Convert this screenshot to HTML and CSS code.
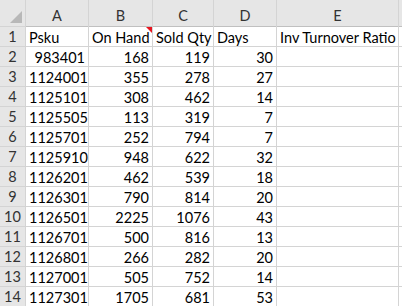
FILE: index.html
```html
<!DOCTYPE html>
<html lang="en">
<head>
    <meta charset="UTF-8">
    <title>Inventory Sheet</title>
    <link rel="stylesheet" href="styles.css">
</head>
<body>

<div class="sheet">
    <div class="corner">
        <svg width="14" height="14" viewBox="0 0 14 14"><polygon points="13,1 13,13 1,13" fill="#b8b8b8"/></svg>
    </div>
    <div class="col-head">A</div>
    <div class="col-head">B</div>
    <div class="col-head">C</div>
    <div class="col-head">D</div>
    <div class="col-head">E</div>
    <div class="col-head"></div>

    <div class="row-head">1</div>
    <div class="cell">Psku</div>
    <div class="cell note">On Hand</div>
    <div class="cell">Sold Qty</div>
    <div class="cell">Days</div>
    <div class="cell">Inv Turnover Ratio</div>
    <div class="cell"></div>
</div>

<script>
    const rows = [
        [983401, 168, 119, 30],
        [1124001, 355, 278, 27],
        [1125101, 308, 462, 14],
        [1125505, 113, 319, 7],
        [1125701, 252, 794, 7],
        [1125910, 948, 622, 32],
        [1126201, 462, 539, 18],
        [1126301, 790, 814, 20],
        [1126501, 2225, 1076, 43],
        [1126701, 500, 816, 13],
        [1126801, 266, 282, 20],
        [1127001, 505, 752, 14],
        [1127301, 1705, 681, 53]
    ];

    const sheet = document.querySelector(".sheet");
    rows.forEach((r, i) => {
        let html = '<div class="row-head">' + (i + 2) + '</div>';
        r.forEach(v => {
            html += '<div class="cell num">' + v + '</div>';
        });
        html += '<div class="cell"></div><div class="cell"></div>';
        sheet.insertAdjacentHTML("beforeend", html);
    });
</script>

</body>
</html>
```

FILE: styles.css
```css
body {
    margin: 0;
    background: #fff;
    font-family: Lato, "Liberation Sans", sans-serif;
    font-size: 14.5px;
    color: #000;
    overflow: hidden;
}
.sheet {
    display: grid;
    grid-template-columns: 25px 62px 63px 60px 62px 121px 20px;
    grid-template-rows: 26px;
    grid-auto-rows: 19px;
    gap: 1px;
    background-color: #d4d4d4;
    width: 420px;
}
.corner {
    background-color: #e6e6e6;
    display: flex;
    align-items: flex-end;
    justify-content: flex-end;
    padding: 0 2px 2px 0;
}
.corner svg {
    display: block;
}
.col-head {
    background-color: #e6e6e6;
    color: #333;
    text-align: center;
    line-height: 32px;
    border-bottom: 1px solid #c0c0c0;
    margin-bottom: -1px;
}
.row-head {
    background-color: #e6e6e6;
    color: #333;
    text-align: center;
    line-height: 20px;
}
.cell {
    background-color: #fff;
    padding: 0 3px;
    line-height: 21px;
    white-space: nowrap;
    overflow: visible;
    position: relative;
}
.num {
    text-align: right;
}
.note::after {
    content: "";
    position: absolute;
    top: 0;
    right: 0;
    border-top: 6px solid #e8141e;
    border-left: 6px solid transparent;
}
```
